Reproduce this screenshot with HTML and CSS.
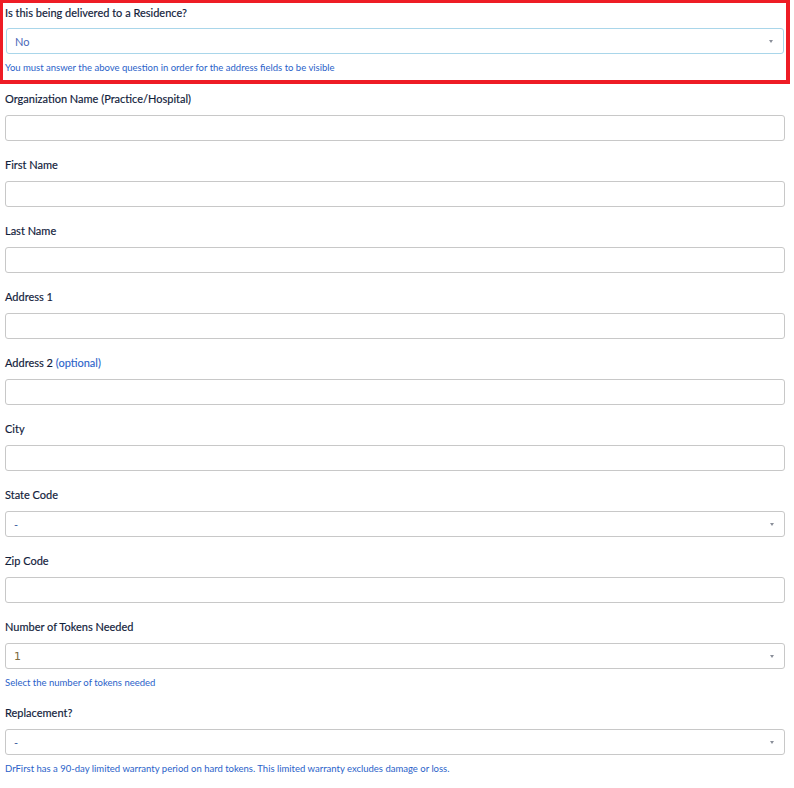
FILE: index.html
```html
<!DOCTYPE html>
<html>
<head>
<meta charset="utf-8">
<link rel="stylesheet" href="styles.css">
</head>
<body>
<div class="form">
  <div class="residence">
    <label class="label">Is this being delivered to a Residence?</label>
    <div class="select select-blue"><span class="val val-no">No</span><span class="caret"></span></div>
    <div class="help">You must answer the above question in order for the address fields to be visible</div>
  </div>

  <div class="field">
    <label class="label">Organization Name (Practice/Hospital)</label>
    <div class="input"></div>
  </div>
  <div class="field">
    <label class="label">First Name</label>
    <div class="input"></div>
  </div>
  <div class="field">
    <label class="label">Last Name</label>
    <div class="input"></div>
  </div>
  <div class="field">
    <label class="label">Address 1</label>
    <div class="input"></div>
  </div>
  <div class="field">
    <label class="label">Address 2 <span class="optional">(optional)</span></label>
    <div class="input"></div>
  </div>
  <div class="field">
    <label class="label">City</label>
    <div class="input"></div>
  </div>
  <div class="field">
    <label class="label">State Code</label>
    <div class="input select"><span class="val">-</span><span class="caret"></span></div>
  </div>
  <div class="field">
    <label class="label">Zip Code</label>
    <div class="input"></div>
  </div>
  <div class="field">
    <label class="label">Number of Tokens Needed</label>
    <div class="input select"><span class="val val-num">1</span><span class="caret"></span></div>
    <div class="help">Select the number of tokens needed</div>
  </div>
  <div class="field">
    <label class="label">Replacement?</label>
    <div class="input select"><span class="val">-</span><span class="caret"></span></div>
    <div class="help">DrFirst has a 90-day limited warranty period on hard tokens. This limited warranty excludes damage or loss.</div>
  </div>
</div>
</body>
</html>
```

FILE: styles.css
```css
html, body {
  margin: 0;
  padding: 0;
  background: #ffffff;
}
body {
  font-family: Lato, "Open Sans", Arial, sans-serif;
  color: #1b2a3a;
  width: 794px;
}
.form {
  display: flex;
  flex-direction: column;
}
.residence {
  width: 779px;
  border: 3px solid #ee1c25;
  border-right-width: 4px;
  border-bottom-width: 4px;
  padding: 2px 2px 6px 2px;
  margin-bottom: 7px;
  display: flex;
  flex-direction: column;
}
.label {
  display: block;
  font-size: 11px;
  font-weight: 400;
  -webkit-text-stroke: 0.15px #10203a;
  line-height: 16px;
  color: #10203a;
  margin-bottom: 7px;
}
.optional {
  color: #2a62c9;
  -webkit-text-stroke: 0.1px #2a62c9;
}
.field {
  padding: 0 5px 0 5px;
  width: 780px;
  margin-bottom: 16px;
  display: flex;
  flex-direction: column;
}
.field .label {
  margin-bottom: 8px;
}
.input, .select {
  box-sizing: border-box;
  height: 26px;
  border: 1px solid #c8c8c8;
  border-radius: 3px;
  background: #fff;
  display: flex;
  align-items: center;
  justify-content: space-between;
  padding: 0 9px 0 8px;
}
.residence .select {
  margin-left: 1px;
  border-color: #a9d6ea;
}
.val {
  font-size: 11px;
  color: #3a5a9c;
}
.val-no {
  color: #4a68b8;
}
.val-num {
  color: #7d6a3e;
  font-family: "DejaVu Sans", Lato, sans-serif;
  font-size: 11px;
}
.caret {
  width: 0;
  height: 0;
  border-left: 2.5px solid transparent;
  border-right: 2.5px solid transparent;
  border-top: 3px solid #8a8f99;
  margin-right: 1px;
}
.help {
  font-size: 9.5px;
  line-height: 12px;
  color: #2a62c9;
  margin-top: 8px;
}
```
